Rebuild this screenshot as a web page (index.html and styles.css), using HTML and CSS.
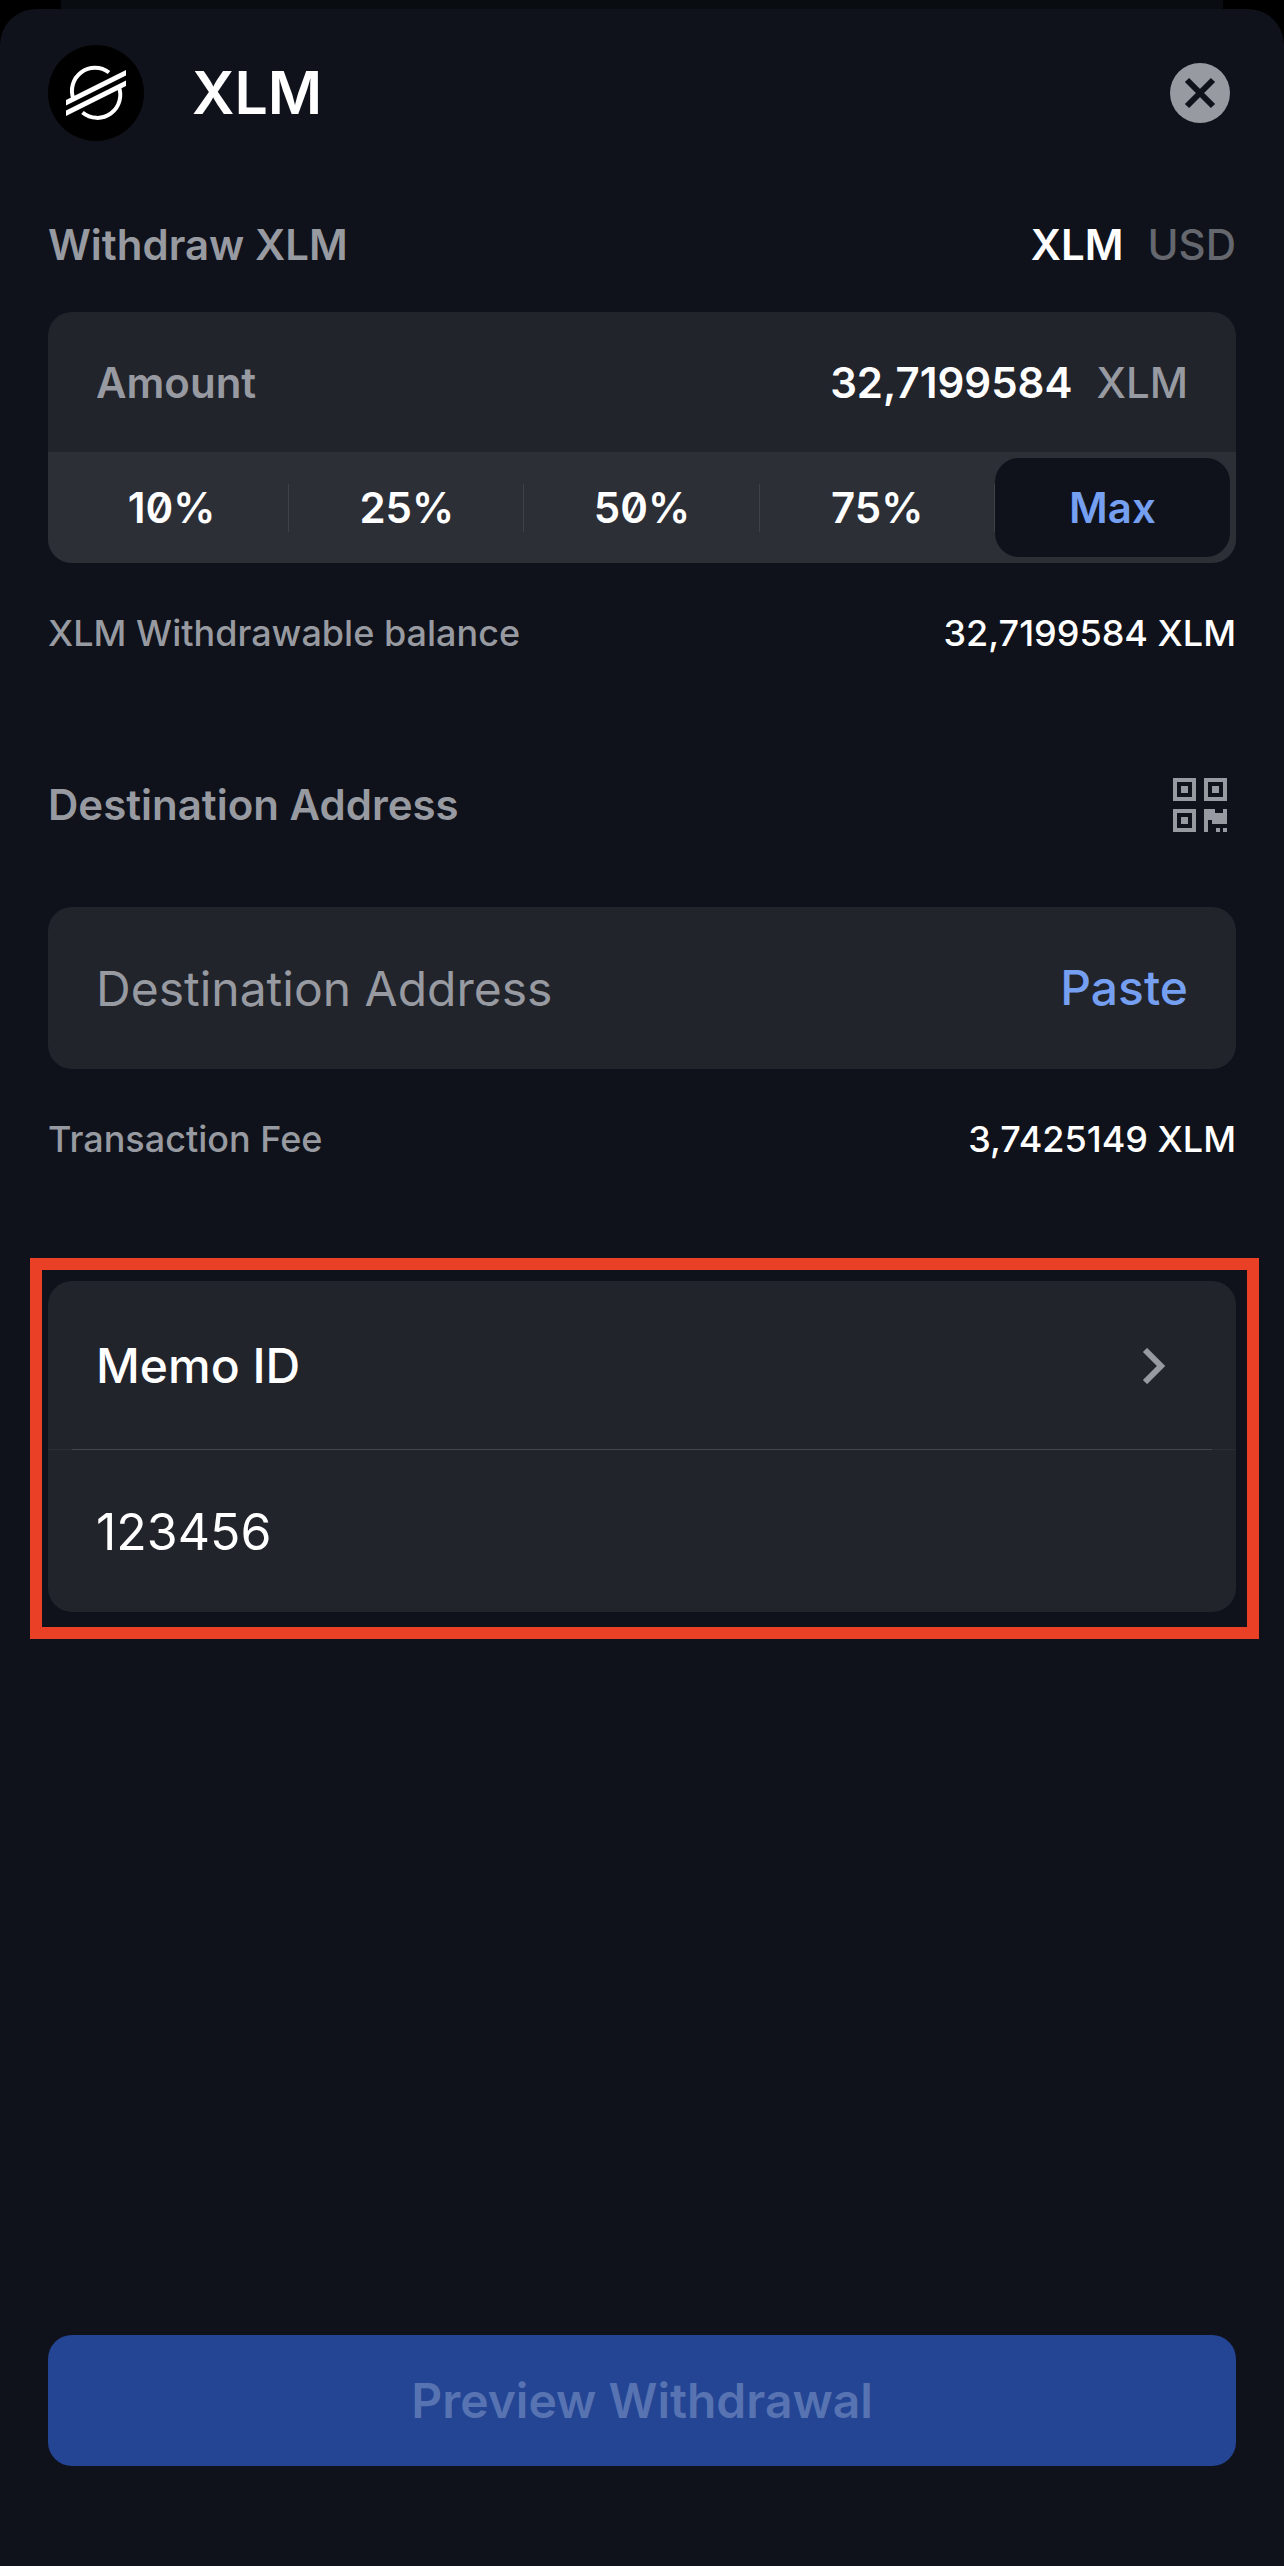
FILE: index.html
```html
<!DOCTYPE html>
<html lang="en">
<head>
<meta charset="utf-8">
<meta name="viewport" content="width=device-width, initial-scale=1">
<title>Withdraw XLM</title>
<link rel="stylesheet" href="styles.css">
</head>
<body>
<div class="backdrop"></div>
<main class="sheet">
  <header class="header">
    <svg class="coin" viewBox="0 0 96 96" aria-hidden="true">
      <circle cx="48" cy="48" r="48" fill="#000"/>
      <g fill="none" stroke="#fff" stroke-width="4">
        <path d="M25.500 54A23 23 0 0 1 61 27.500"/>
        <path d="M70.500 41A23 23 0 0 1 34.500 67.500"/>
      </g>
      <path fill="#fff" d="M18 55L78 25V30.500L18 60.500ZM18 65.500L78 35.500V41L18 71Z"/>
    </svg>
    <h1 class="title">XLM</h1>
    <button class="icon-button" type="button" aria-label="Close">
      <svg class="close" viewBox="0 0 60 60" aria-hidden="true">
        <circle cx="30" cy="30" r="30" fill="#989aa1"/>
        <path d="M17 17L43 43M43 17L17 43" stroke="#0f121a" stroke-width="6"/>
      </svg>
    </button>
  </header>

  <form class="form">
    <div class="row row-label">
      <label for="amount">Withdraw XLM</label>
      <div class="units">
        <button class="unit unit-active" type="button">XLM</button>
        <button class="unit" type="button">USD</button>
      </div>
    </div>

    <div class="card amount-card">
      <div class="amount">
        <label for="amount">Amount</label>
        <input class="amount-input" id="amount" type="text" value="32,7199584">
        <span class="amount-unit">XLM</span>
      </div>
      <div class="segments">
        <button class="segment" type="button">10%</button>
        <button class="segment" type="button">25%</button>
        <button class="segment" type="button">50%</button>
        <button class="segment" type="button">75%</button>
        <button class="segment segment-active" type="button">Max</button>
      </div>
    </div>

    <div class="row row-detail">
      <span>XLM Withdrawable balance</span>
      <span class="value">32,7199584 XLM</span>
    </div>

    <div class="row row-label row-address">
      <label for="address">Destination Address</label>
      <button class="icon-button" type="button" aria-label="Scan QR code">
        <svg class="qr" viewBox="0 0 54 54" fill="#989aa1" aria-hidden="true">
          <path fill-rule="evenodd" d="M0 0H23V23H0ZM4 4V19H19V4ZM8 8H15V15H8Z"/>
          <path fill-rule="evenodd" d="M31 0H54V23H31ZM35 4V19H50V4ZM39 8H46V15H39Z"/>
          <path fill-rule="evenodd" d="M0 31H23V54H0ZM4 35V50H19V35ZM8 39H15V46H8Z"/>
          <path d="M31 31H42V35H50V31H54V46H39V42H35V54H31ZM43 50H47V54H43ZM50 50H54V54H50Z"/>
        </svg>
      </button>
    </div>

    <div class="card address">
      <input class="text-input" id="address" type="text" placeholder="Destination Address">
      <button class="paste" type="button">Paste</button>
    </div>

    <div class="row row-detail">
      <span>Transaction Fee</span>
      <span class="value">3,7425149 XLM</span>
    </div>

    <div class="card memo">
      <button class="memo-type" type="button">
        <span>Memo ID</span>
        <svg class="chevron" viewBox="0 0 24 36" aria-hidden="true">
          <path d="M3 2L19 18L3 34" fill="none" stroke="#989aa1" stroke-width="6"/>
        </svg>
      </button>
      <div class="memo-value">
        <input class="text-input memo-input" type="text" value="123456" aria-label="Memo ID">
      </div>
    </div>

    <button class="submit" type="submit" disabled>Preview Withdrawal</button>
  </form>
</main>
</body>
</html>
```
FILE: styles.css
```css
* {
  box-sizing: border-box;
}

body {
  display: flex;
  flex-direction: column;
  min-height: 100vh;
  margin: 0;
  background: #000;
  color: #fff;
  font-family: Inter, "Liberation Sans", sans-serif;
  font-size: 42px;
  line-height: 48px;
}

button,
input {
  margin: 0;
  padding: 0;
  border: 0;
  background: none;
  color: inherit;
  font: inherit;
}

/* The screen behind the sheet, peeking out above it */
.backdrop {
  height: 9px;
  margin: 0 61px;
  background: #090c10;
}

.sheet {
  display: flex;
  flex: 1;
  flex-direction: column;
  padding: 36px 48px 100px;
  border-radius: 36px 36px 0 0;
  background: #0f121a;
}

.header {
  display: flex;
  align-items: center;
  margin-bottom: 80px;
}

.coin {
  width: 96px;
  height: 96px;
}

.title {
  flex: 1;
  margin: 0 48px;
  font-size: 59px;
  font-weight: 600;
  line-height: 72px;
}

.icon-button {
  display: flex;
  margin-right: 6px;
}

.close {
  width: 60px;
  height: 60px;
}

.form {
  display: flex;
  flex: 1;
  flex-direction: column;
}

.row {
  display: flex;
  align-items: center;
  justify-content: space-between;
  color: #989aa1;
}

.row-label {
  margin-bottom: 43px;
  font-weight: 600;
}

.row-detail {
  margin-top: 46px;
  font-size: 36px;
  font-weight: 500;
}

.value {
  color: #fff;
}

.units {
  display: flex;
  gap: 24px;
}

.unit {
  color: #65676e;
  font-weight: 500;
}

.unit-active {
  color: #fff;
  font-weight: 600;
}

.card {
  border-radius: 24px;
  background: #22242c;
}

.amount-card {
  overflow: hidden;
}

.amount {
  display: flex;
  align-items: center;
  height: 140px;
  padding: 2px 48px 0;
  gap: 24px;
  color: #989aa1;
  font-weight: 600;
}

.amount-input {
  flex: 1;
  min-width: 0;
  color: #fff;
  text-align: right;
}

.amount-unit {
  font-weight: 500;
}

.segments {
  display: flex;
  height: 111px;
  padding: 6px;
  background: #2d2f37;
}

.segment {
  flex: 1;
  border-radius: 24px;
  background: linear-gradient(#3f4149, #3f4149) right center / 1px 48px no-repeat;
  font-weight: 600;
  font-feature-settings: "zero";
}

.segment-active {
  background: #0f121a;
  color: #759ff0;
}

.row-address {
  margin-top: 121px;
  margin-bottom: 75px;
}

.row-address .icon-button {
  margin-right: 9px;
}

.qr {
  width: 54px;
  height: 54px;
}

.address {
  display: flex;
  align-items: center;
  height: 162px;
  padding: 0 48px;
}

.text-input {
  flex: 1;
  min-width: 0;
  height: 72px;
  font-size: 48px;
}

.text-input::placeholder {
  color: #989aa1;
  opacity: 1;
}

.paste {
  color: #759ff0;
  font-size: 48px;
  font-weight: 500;
}

.memo {
  position: relative;
  margin-top: 118px;
}

/* Highlight frame around the memo fields */
.memo::after {
  position: absolute;
  inset: -23px -23px -27px -18px;
  border: 12px solid #e94026;
  content: "";
  pointer-events: none;
}

.memo-type {
  display: flex;
  align-items: center;
  justify-content: space-between;
  width: 100%;
  height: 169px;
  padding: 0 70px 0 48px;
  background:
    linear-gradient(#44464e, #44464e) center bottom / calc(100% - 48px) 1px no-repeat,
    linear-gradient(#2b2d35, #2b2d35) center bottom / 100% 1px no-repeat;
  font-size: 48px;
  font-weight: 500;
}

.chevron {
  width: 24px;
  height: 36px;
}

.memo-value {
  display: flex;
  align-items: center;
  height: 162px;
  padding: 2px 48px 0;
}

.memo-input {
  font-size: 50px;
}

.submit {
  height: 131px;
  margin-top: auto;
  border-radius: 24px;
  background: #244593;
  color: #5873b1;
  font-size: 48px;
  font-weight: 600;
}
```
